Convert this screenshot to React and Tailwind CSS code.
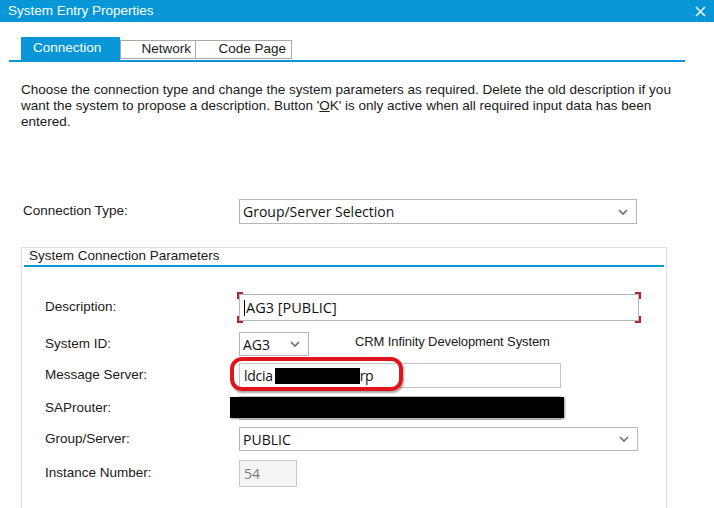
import React from 'react'

const BLUE = 'bg-[#0797d9]'

function Chevron() {
  return (
    <svg width="10" height="6" viewBox="0 0 10 6" className="shrink-0">
      <path d="M1 1l4 4 4-4" fill="none" stroke="#6b6b6b" strokeWidth="1.6" />
    </svg>
  )
}

function Select({ width, height = 'h-[24px]', children }) {
  return (
    <div className={`${width} ${height} border border-[#b7b7b7] bg-white flex items-center justify-between pl-[3px] pr-[8px] font-['Open_Sans',sans-serif] text-[14px] text-[#111]`}>
      <span>{children}</span>
      <Chevron />
    </div>
  )
}

function Row({ label, mt, height, children }) {
  return (
    <div className={`flex items-center pl-[23px] ${mt} ${height}`}>
      <div className="w-[194px] shrink-0">{label}</div>
      {children}
    </div>
  )
}

export default function App() {
  return (
    <div className="w-[714px] h-[508px] overflow-hidden bg-white font-['Liberation_Sans',Arial,sans-serif] text-[13.5px] text-[#1a1a1a]">
      {/* title bar */}
      <div className={`h-[22px] ${BLUE} flex items-center justify-between pl-[8px] pr-[8px] text-white`}>
        <span className="text-[13.5px]">System Entry Properties</span>
        <svg width="11" height="11" viewBox="0 0 11 11">
          <path d="M1 1l9 9M10 1l-9 9" stroke="white" strokeWidth="1.5" />
        </svg>
      </div>

      {/* tabs */}
      <div className="pt-[15px]">
        <div className="flex items-start ml-[21px] h-[23px]">
          <div className={`w-[99px] h-[23px] ${BLUE} text-white flex items-center pl-[12px]`}>Connection</div>
          <div className="w-[76px] h-[19px] mt-[3px] border border-[#a8a8a8] flex items-center justify-end pr-[4px]">Network</div>
          <div className="w-[96px] h-[19px] mt-[3px] border border-l-0 border-[#a8a8a8] flex items-center justify-end pr-[5px]">Code Page</div>
        </div>
        <div className={`ml-[9px] w-[676px] h-[2px] ${BLUE}`} />
      </div>

      {/* info text */}
      <p className="mt-[20px] ml-[21px] w-[680px] leading-[16px] whitespace-nowrap">
        Choose the connection type and change the system parameters as required. Delete the old description if you
        <br />
        want the system to propose a description. Button '<span className="underline">O</span>K' is only active when all required input data has been
        <br />
        entered.
      </p>

      {/* connection type */}
      <div className="flex items-center mt-[69px] pl-[23px] h-[25px]">
        <div className="w-[216px] shrink-0">Connection Type:</div>
        <Select width="w-[398px]" height="h-[25px]">Group/Server Selection</Select>
      </div>

      {/* group box */}
      <div className="mt-[23px] ml-[21px] w-[646px] h-[261px] border border-b-0 border-[#dedede]">
        <div className="h-[17px] pl-[7px] leading-[16px]">System Connection Parameters</div>
        <div className={`ml-[2px] w-[640px] h-[2px] ${BLUE}`} />

        <Row label="Description:" mt="mt-[27px]" height="h-[27px]">
          <div className="relative">
            <div className="w-[400px] h-[27px] border border-[#b7b7b7] flex items-center pl-[4px] font-['Open_Sans',sans-serif] text-[14.5px] text-[#111]">
              <span className="w-px h-[16px] bg-black mr-px" />AG3 [PUBLIC]
            </div>
            <span className="absolute -left-[2px] -top-[2px] w-[6px] h-[7px] border-l-2 border-t-2 border-[#b3262a]" />
            <span className="absolute -left-[2px] -bottom-[2px] w-[6px] h-[7px] border-l-2 border-b-2 border-[#b3262a]" />
            <span className="absolute -right-[2px] -top-[2px] w-[6px] h-[7px] border-r-2 border-t-2 border-[#b3262a]" />
            <span className="absolute -right-[2px] -bottom-[2px] w-[6px] h-[7px] border-r-2 border-b-2 border-[#b3262a]" />
          </div>
        </Row>

        <Row label="System ID:" mt="mt-[11px]" height="h-[24px]">
          <Select width="w-[70px]">AG3</Select>
          <span className="ml-[46px] -mt-[4px] text-[13px] tracking-[-0.1px]">CRM Infinity Development System</span>
        </Row>

        <Row label="Message Server:" mt="mt-[7px]" height="h-[25px]">
          <div className="relative">
            <div className="w-[322px] h-[25px] border border-[#c4c4c4] flex items-center pl-[4px] font-['Open_Sans',sans-serif] text-[14px] text-[#111] tracking-[-0.3px]">
              ldcia<span className="inline-block ml-[2px] w-[85px] h-[16px] bg-black" />rp
            </div>
            <div className="absolute -left-[9px] -top-[6px] w-[173px] h-[34px] rounded-[12px] border-[4px] border-[#e2141b] shadow-[1px_2px_2px_rgba(0,0,0,0.35)]" />
          </div>
        </Row>

        <Row label="SAProuter:" mt="mt-[8px]" height="h-[24px]">
          <div className="relative">
            <div className="w-[322px] h-[24px] border border-[#c4c4c4]" />
            <div className="absolute -left-[9px] top-[1px] w-[334px] h-[21px] bg-black shadow-[1px_1px_2px_rgba(0,0,0,0.4)]" />
          </div>
        </Row>

        <Row label="Group/Server:" mt="mt-[7px]" height="h-[24px]">
          <Select width="w-[399px]">PUBLIC</Select>
        </Row>

        <Row label="Instance Number:" mt="mt-[9px]" height="h-[27px]">
          <div className="w-[58px] h-[27px] border border-[#c8c8c8] bg-[#f4f4f4] flex items-center pl-[4px] font-['Open_Sans',sans-serif] text-[14px] text-[#7a7a7a]">
            54
          </div>
        </Row>
      </div>
    </div>
  )
}
